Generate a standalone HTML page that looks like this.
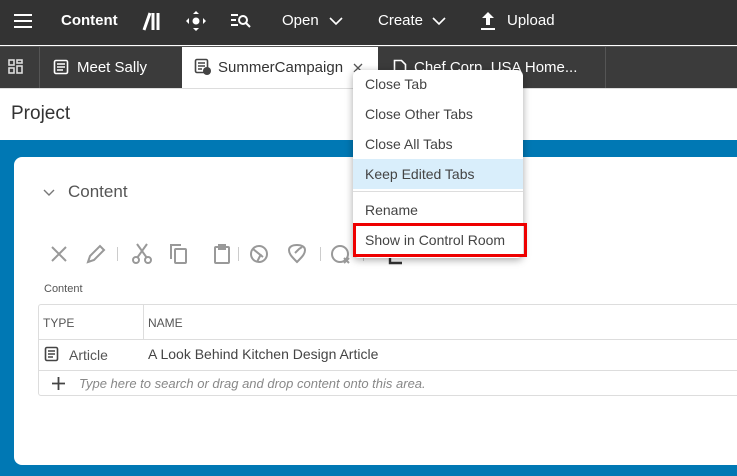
<!DOCTYPE html>
<html><head><style>
*{margin:0;padding:0;box-sizing:border-box}
body{width:737px;height:476px;overflow:hidden;font-family:"Liberation Sans",sans-serif;background:#fff;position:relative}
.abs{position:absolute}
.top{left:0;top:0;width:737px;height:45px;background:#333}
.tabs{left:0;top:46px;width:737px;height:42px;background:#3b3b3b;border-top:1px solid #555}
.t{color:#fff;font-size:15px;position:absolute}
.blue{left:0;top:140px;width:737px;height:336px;background:#0078b4}
.card{left:14px;top:157px;width:740px;height:308px;background:#fff;border-radius:8px}
.menu{left:353px;top:70px;width:170px;height:188px;background:#fff;border-radius:6px;box-shadow:0 2px 8px rgba(0,0,0,.35)}
.mi{position:absolute;left:12px;font-size:14px;color:#444}
</style></head><body>
<div class="abs top">
 <div class="abs" style="left:14px;top:14px;width:18px;height:2px;background:#fff;box-shadow:0 6px 0 #fff,0 12px 0 #fff"></div>
 <div class="t" style="left:61px;top:12px;font-weight:bold;font-size:15px">Content</div>
 <svg class="abs" style="left:142px;top:10px" width="20" height="22"><path d="M2 20 L8 3 M11 3V20 M16 3V20" stroke="#fff" stroke-width="3"/></svg>
 <svg class="abs" style="left:186px;top:10px" width="20" height="22"><circle cx="10" cy="11" r="3.5" fill="#fff"/><path d="M10 1l-3 3h6zM10 21l-3-3h6zM0 11l3-3v6zM20 11l-3-3v6z" fill="#fff"/></svg>
 <svg class="abs" style="left:230px;top:12px" width="22" height="18"><path d="M1 3h7M1 8h5M1 13h7" stroke="#fff" stroke-width="2"/><circle cx="13" cy="8" r="4" stroke="#fff" stroke-width="2" fill="none"/><path d="M16 11l4 4" stroke="#fff" stroke-width="2"/></svg>
 <div class="t" style="left:282px;top:12px">Open</div>
 <svg class="abs" style="left:329px;top:16px" width="14" height="10"><path d="M1 2l6 6 6-6" stroke="#fff" stroke-width="1.6" fill="none"/></svg>
 <div class="t" style="left:378px;top:12px">Create</div>
 <svg class="abs" style="left:432px;top:16px" width="14" height="10"><path d="M1 2l6 6 6-6" stroke="#fff" stroke-width="1.6" fill="none"/></svg>
 <svg class="abs" style="left:479px;top:10px" width="18" height="22"><path d="M9 2L3 8h4v7h4V8h4z" fill="#fff"/><path d="M2 19h14" stroke="#fff" stroke-width="2"/></svg>
 <div class="t" style="left:507px;top:12px">Upload</div>
</div>
<div class="abs tabs">
 <svg class="abs" style="left:8px;top:12px" width="16" height="16"><g fill="none" stroke="#ddd" stroke-width="1.6"><rect x="1" y="1" width="5" height="5"/><rect x="9" y="1" width="5" height="3"/><rect x="1" y="9" width="5" height="5"/><rect x="9" y="7" width="5" height="7"/></g></svg>
 <div class="abs" style="left:39px;top:0;width:1px;height:41px;background:#555"></div>
 <svg class="abs" style="left:53px;top:12px" width="16" height="16"><rect x="1.5" y="1.5" width="13" height="13" rx="1.5" fill="none" stroke="#fff" stroke-width="1.6"/><path d="M4 5h8M4 8h8M4 11h6" stroke="#fff" stroke-width="1.4"/></svg>
 <div class="t" style="left:77px;top:12px">Meet Sally</div>
 <div class="abs" style="left:182px;top:0;width:196px;height:42px;background:#fff"></div>
 <svg class="abs" style="left:194px;top:11px" width="18" height="18"><rect x="1.5" y="1.5" width="12" height="13" rx="1.5" fill="none" stroke="#444" stroke-width="1.6"/><path d="M4 5h7M4 8h7M4 11h4" stroke="#444" stroke-width="1.4"/><circle cx="13" cy="13" r="4" fill="#444"/></svg>
 <div class="t" style="left:218px;top:12px;color:#333">SummerCampaign</div>
 <svg class="abs" style="left:353px;top:16px" width="10" height="10"><path d="M1 1l8 8M9 1l-8 8" stroke="#555" stroke-width="1.3"/></svg>
 <svg class="abs" style="left:393px;top:12px" width="14" height="17"><path d="M1.5 1.5h7l4 4v10h-11z" fill="none" stroke="#fff" stroke-width="1.6"/></svg>
 <div class="t" style="left:414px;top:12px">Chef Corp. USA Home...</div>
 <div class="abs" style="left:605px;top:0;width:1px;height:41px;background:#555"></div>
</div>
<div class="abs" style="left:11px;top:103px;font-size:19px;color:#333">Project</div>
<div class="abs" style="left:0;top:88px;width:737px;height:1px;background:#ddd"></div>
<div class="abs blue"></div>
<div class="abs card">
 <svg class="abs" style="left:29px;top:32px" width="12" height="8"><path d="M1 1l5 5 5-5" stroke="#777" stroke-width="1.4" fill="none"/></svg>
 <div class="abs" style="left:54px;top:25px;font-size:17px;color:#555">Content</div>
 <svg class="abs" style="left:30px;top:82px" width="380" height="30">
  <g fill="none" stroke="#999" stroke-width="2">
   <path d="M8 8l14 14M22 8l-14 14"/>
   <path d="M44 23l2-6 10-10 4 4-10 10z"/>
   <circle cx="92" cy="21" r="3"/><circle cx="104" cy="21" r="3"/><path d="M93 5l10 14M103 5l-10 14"/>
   <rect x="131" y="10" width="11" height="14" rx="1"/><path d="M127 20V6h10"/>
   <rect x="171" y="8" width="14" height="16" rx="1"/><path d="M175 6h6v4h-6z"/>
   <circle cx="215" cy="15" r="8"/><path d="M209 10l10 8M213 23l4-8"/>
   <path d="M253 23c-5-5-8-8-8-12 0-3 3-5 8-5 5 0 8 2 8 5 0 4-3 7-8 12zM251 14l4-4 3-2"/>
   <circle cx="296" cy="15" r="8"/><path d="M300 19l5 5M305 19l-5 5"/>
  </g>
  <g stroke="#ccc" stroke-width="1"><path d="M73.5 8v14M194.5 8v14M276.5 8v14M319.5 8v14"/></g>
  <path d="M346 12v12h12M353 10h8M357 6v8" stroke="#333" stroke-width="2.4" fill="none"/>
 </svg>
 <div class="abs" style="left:30px;top:126px;font-size:11px;color:#555">Content</div>
 <div class="abs" style="left:24px;top:147px;width:720px;height:92px;border:1px solid #ddd;border-radius:3px"></div>
 <div class="abs" style="left:24px;top:182px;width:720px;height:1px;background:#ddd"></div>
 <div class="abs" style="left:24px;top:213px;width:720px;height:1px;background:#ddd"></div>
 <div class="abs" style="left:129px;top:147px;width:1px;height:35px;background:#ddd"></div>
 <div class="abs" style="left:29px;top:159px;font-size:12px;color:#555">TYPE</div>
 <div class="abs" style="left:134px;top:159px;font-size:12px;color:#555">NAME</div>
 <svg class="abs" style="left:30px;top:189px" width="16" height="16"><rect x="1.5" y="1.5" width="12" height="13" rx="1.5" fill="none" stroke="#444" stroke-width="1.6"/><path d="M4 5h7M4 8h7M4 11h5" stroke="#444" stroke-width="1.4"/></svg>
 <div class="abs" style="left:55px;top:190px;font-size:14px;color:#555">Article</div>
 <div class="abs" style="left:134px;top:189px;font-size:14px;color:#444">A Look Behind Kitchen Design Article</div>
 <svg class="abs" style="left:38px;top:220px" width="13" height="13"><path d="M6.5 0v13M0 6.5h13" stroke="#444" stroke-width="1.8"/></svg>
 <div class="abs" style="left:65px;top:219px;font-size:13px;color:#888;font-style:italic">Type here to search or drag and drop content onto this area.</div>
</div>
<div class="abs menu">
 <div class="mi" style="top:6px">Close Tab</div>
 <div class="mi" style="top:36px">Close Other Tabs</div>
 <div class="mi" style="top:66px">Close All Tabs</div>
 <div class="abs" style="left:0;top:89px;width:170px;height:30px;background:#d9eefb"></div>
 <div class="mi" style="top:96px">Keep Edited Tabs</div>
 <div class="abs" style="left:0;top:121px;width:170px;height:1px;background:#ddd"></div>
 <div class="mi" style="top:132px">Rename</div>
 <div class="mi" style="top:162px">Show in Control Room</div>
 <div class="abs" style="left:0;top:153px;width:174px;height:34px;border:3px solid #e00"></div>
</div>
</body></html>
